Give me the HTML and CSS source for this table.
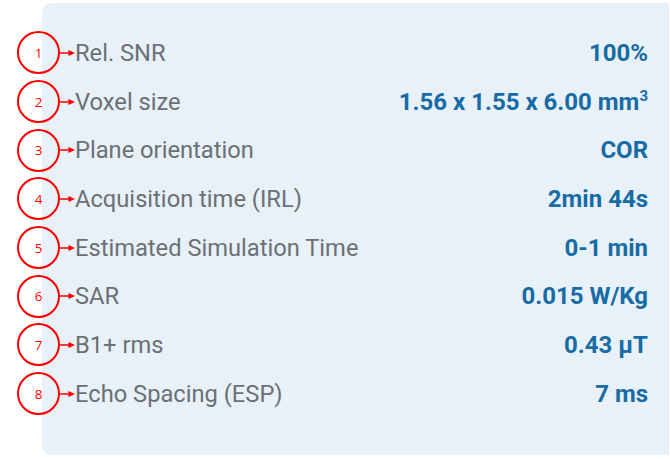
FILE: index.html
```html
<!DOCTYPE html>
<html>
<head>
<meta charset="utf-8">
<link rel="stylesheet" href="styles.css">
</head>
<body>
<div class="panel">
  <div class="row"><span class="badge">1</span><svg class="arrow" viewBox="0 0 16 8"><line x1="0" y1="4" x2="10" y2="4"/><polygon points="9,0.8 16,4 9,7.2"/></svg><span class="label">Rel. SNR</span><span class="value">100%</span></div>
  <div class="row"><span class="badge">2</span><svg class="arrow" viewBox="0 0 16 8"><line x1="0" y1="4" x2="10" y2="4"/><polygon points="9,0.8 16,4 9,7.2"/></svg><span class="label">Voxel size</span><span class="value">1.56 x 1.55 x 6.00 mm<sup>3</sup></span></div>
  <div class="row"><span class="badge">3</span><svg class="arrow" viewBox="0 0 16 8"><line x1="0" y1="4" x2="10" y2="4"/><polygon points="9,0.8 16,4 9,7.2"/></svg><span class="label">Plane orientation</span><span class="value">COR</span></div>
  <div class="row"><span class="badge">4</span><svg class="arrow" viewBox="0 0 16 8"><line x1="0" y1="4" x2="10" y2="4"/><polygon points="9,0.8 16,4 9,7.2"/></svg><span class="label">Acquisition time (IRL)</span><span class="value">2min 44s</span></div>
  <div class="row"><span class="badge">5</span><svg class="arrow" viewBox="0 0 16 8"><line x1="0" y1="4" x2="10" y2="4"/><polygon points="9,0.8 16,4 9,7.2"/></svg><span class="label">Estimated Simulation Time</span><span class="value">0-1 min</span></div>
  <div class="row"><span class="badge">6</span><svg class="arrow" viewBox="0 0 16 8"><line x1="0" y1="4" x2="10" y2="4"/><polygon points="9,0.8 16,4 9,7.2"/></svg><span class="label">SAR</span><span class="value">0.015 W/Kg</span></div>
  <div class="row"><span class="badge">7</span><svg class="arrow" viewBox="0 0 16 8"><line x1="0" y1="4" x2="10" y2="4"/><polygon points="9,0.8 16,4 9,7.2"/></svg><span class="label">B1+ rms</span><span class="value">0.43 µT</span></div>
  <div class="row"><span class="badge">8</span><svg class="arrow" viewBox="0 0 16 8"><line x1="0" y1="4" x2="10" y2="4"/><polygon points="9,0.8 16,4 9,7.2"/></svg><span class="label">Echo Spacing (ESP)</span><span class="value">7 ms</span></div>
</div>
</body>
</html>
```

FILE: styles.css
```css
html, body {
  margin: 0;
  padding: 0;
  background: #ffffff;
}
body {
  padding-top: 3px;
  font-family: Roboto, "Liberation Sans", sans-serif;
}
.panel {
  margin-left: 42px;
  margin-right: 1px;
  height: 452px;
  box-sizing: border-box;
  background: #e8f0f8;
  border-radius: 10px 0 0 10px;
  padding: 25.5px 21px 0 0;
}
.row {
  display: flex;
  align-items: center;
  height: 48.7px;
  margin-left: -25px;
}
.badge {
  width: 39px;
  height: 39px;
  border: 2px solid #ff0000;
  border-radius: 50%;
  display: flex;
  align-items: center;
  justify-content: center;
  color: #ff0000;
  font-family: "Open Sans", sans-serif;
  font-size: 13.5px;
  flex: none;
}
.arrow {
  width: 15px;
  height: 8px;
  flex: none;
}
.arrow line {
  stroke: #ff0000;
  stroke-width: 1.6;
}
.arrow polygon {
  fill: #ff0000;
}
.label {
  flex: 1;
  font-size: 23.7px;
  color: #6b7075;
}
.value {
  font-size: 24px;
  font-weight: 700;
  color: #176ca5;
}
.value sup {
  font-size: 15px;
  line-height: 0;
  vertical-align: 9px;
}
```
